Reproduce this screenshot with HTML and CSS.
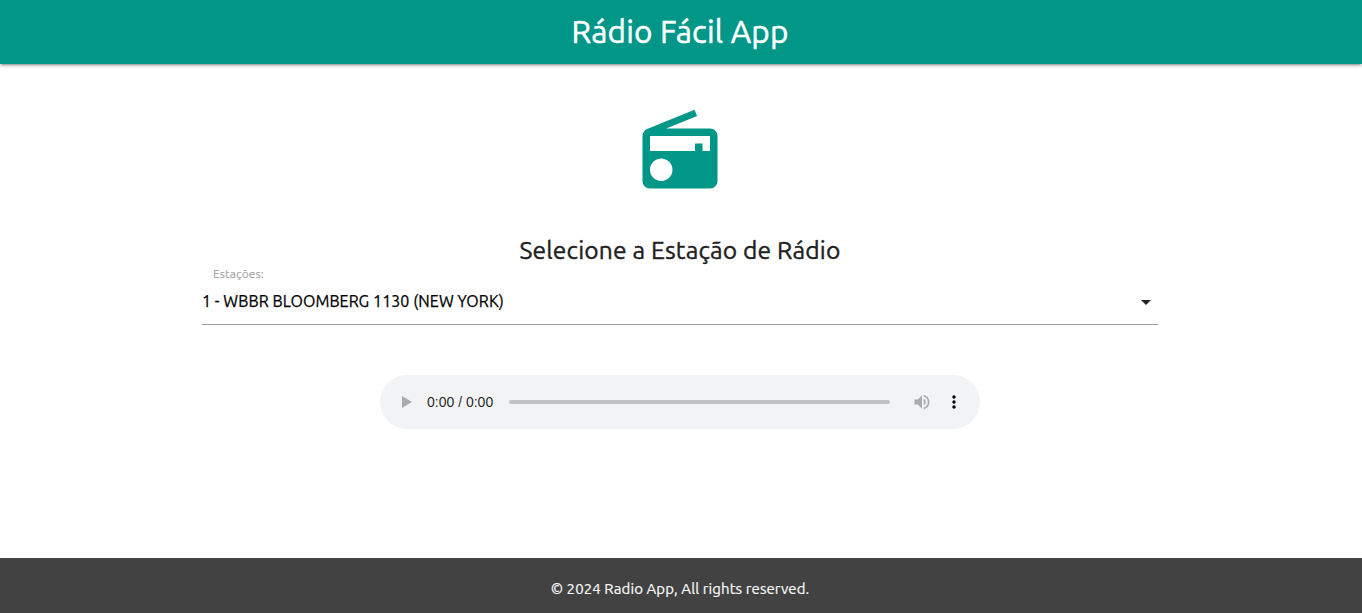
FILE: index.html
```html
<!DOCTYPE html>
<html lang="pt-BR">
<head>
<meta charset="utf-8">
<title>Rádio Fácil App</title>
<link rel="stylesheet" href="styles.css">
</head>
<body>
<header class="navbar"><h1 class="brand">Rádio Fácil App</h1></header>
<main class="content">
  <svg class="radio-icon" viewBox="0 0 24 24" aria-hidden="true"><path d="M3.24 6.15C2.51 6.43 2 7.17 2 8v12c0 1.1.89 2 2 2h16c1.11 0 2-.9 2-2V8c0-1.11-.89-2-2-2H8.3l8.26-3.34L15.88 1 3.24 6.15zM7 20c-1.66 0-3-1.34-3-3s1.34-3 3-3 3 1.34 3 3-1.34 3-3 3zm13-8h-2v-2h-2v2H4V8h16v4z"/></svg>
  <h2 class="title">Selecione a Estação de Rádio</h2>
  <div class="field">
    <span class="label">Estações:</span>
    <div class="select">
      <span class="value">1 - WBBR BLOOMBERG 1130 (NEW YORK)</span>
      <svg class="caret" viewBox="0 0 24 24" aria-hidden="true"><path d="M7 10l5 5 5-5z"/></svg>
    </div>
  </div>
  <div class="player">
    <svg class="play" viewBox="0 0 10 12" aria-hidden="true"><path d="M0 0l10 6L0 12z"/></svg>
    <span class="time">0:00 / 0:00</span>
    <span class="track"></span>
    <svg class="volume" viewBox="0 0 24 24" aria-hidden="true"><path d="M3 9v6h4l5 5V4L7 9H3zm13.5 3c0-1.77-1.02-3.29-2.5-4.03v8.05c1.48-.73 2.5-2.25 2.5-4.02zM14 3.23v2.06c2.89.86 5 3.54 5 6.71s-2.11 5.85-5 6.71v2.06c4.01-.91 7-4.49 7-8.77s-2.99-7.86-7-8.77z"/></svg>
    <svg class="more" viewBox="0 0 24 24" aria-hidden="true"><path d="M12 8c1.1 0 2-.9 2-2s-.9-2-2-2-2 .9-2 2 .9 2 2 2zm0 2c-1.1 0-2 .9-2 2s.9 2 2 2 2-.9 2-2-.9-2-2-2zm0 6c-1.1 0-2 .9-2 2s.9 2 2 2 2-.9 2-2-.9-2-2-2z"/></svg>
  </div>
</main>
<footer class="footer"><span class="copyright">© 2024 Radio App, All rights reserved.</span></footer>
</body>
</html>
```
FILE: styles.css
```css
* { box-sizing: border-box; }
body {
  margin: 0;
  height: 613px;
  display: flex;
  flex-direction: column;
  overflow: hidden;
  background: #fff;
  color: rgba(0, 0, 0, .87);
  font-family: Ubuntu, "Noto Sans", sans-serif;
}
h1, h2 { margin: 0; font-weight: 400; white-space: nowrap; }
.navbar {
  flex: none;
  height: 64px;
  display: flex;
  justify-content: center;
  padding-right: 2px;
  background: #009688;
  color: #fff;
  box-shadow: 0 2px 2px 0 rgba(0,0,0,.14), 0 3px 1px -2px rgba(0,0,0,.12), 0 1px 5px 0 rgba(0,0,0,.2);
}
.brand { font-size: 31.5px; line-height: 64px; letter-spacing: .2px; -webkit-text-stroke: .5px currentColor; }
.content {
  flex: 1;
  display: flex;
  flex-direction: column;
  align-items: center;
  padding: 42px 2px 0 0;
}
.radio-icon { width: 90px; height: 90px; fill: #009688; }
.title { margin-top: 38px; font-size: 24.6px; line-height: 32px; letter-spacing: .15px; color: #212121; -webkit-text-stroke: .4px currentColor; }
.field { width: 956px; }
.label { display: block; padding-left: 11px; font-size: 12px; line-height: 15px; color: #9e9e9e; letter-spacing: .08px; -webkit-text-stroke: .1px currentColor; }
.select {
  height: 44px;
  display: flex;
  justify-content: space-between;
  border-bottom: 1px solid #9e9e9e;
  color: #000;
}
.value { font-size: 16px; line-height: 40px; letter-spacing: .08px; white-space: nowrap; -webkit-text-stroke: .25px currentColor; }
.caret { width: 24px; height: 24px; margin-top: 9px; fill: rgba(0,0,0,.87); }
.player {
  width: 600px;
  height: 54px;
  margin-top: 50px;
  padding: 0 16px 0 22px;
  display: flex;
  align-items: center;
  border-radius: 27px;
  background: #f1f3f4;
}
.play { width: 10px; height: 12px; fill: #a9aaab; }
.time { width: 67px; margin-left: 15px; font: 14px/16px "Liberation Sans", sans-serif; white-space: nowrap; }
.track { flex: 1; height: 4px; margin: 0 22px 0 15px; border-radius: 2px; background: #c1c2c3; }
.volume { width: 20px; height: 20px; fill: #a9aaab; }
.more { width: 20px; height: 20px; margin-left: 12px; fill: #000; }
.footer {
  flex: none;
  height: 55px;
  display: flex;
  justify-content: center;
  padding: 20px 2px 0 0;
  background: #424242;
  color: #fafafa;
}
.copyright { font-size: 15px; line-height: 22px; letter-spacing: .09px; white-space: nowrap; -webkit-text-stroke: .2px currentColor; }
```
